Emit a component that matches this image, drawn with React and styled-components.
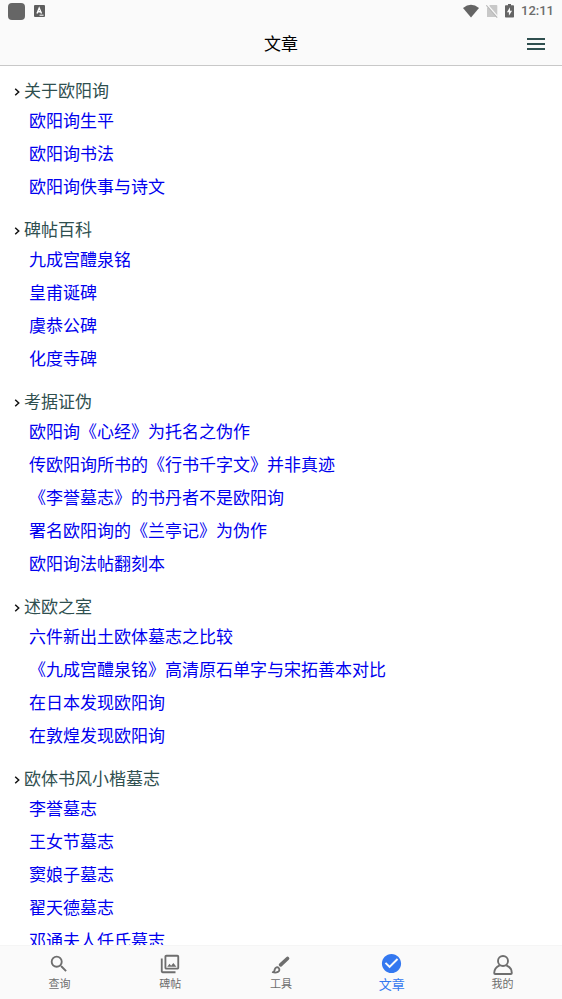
import styled, { createGlobalStyle } from "styled-components";
import { MdCheckCircle, MdOutlinePhotoLibrary, MdSearch } from "react-icons/md";

const GlobalStyle = createGlobalStyle`
    * {
        box-sizing : border-box;
    }
    body {
        margin : 0;
        background-color : #ffffff;
        font-family : Roboto, "Noto Sans CJK SC", sans-serif;
    }
`;

const Container = styled.div`
    height : 100vh;
    display : flex;
    flex-direction : column;
`;

const StatusBar = styled.div`
    height : 22px;
    flex-shrink : 0;
    padding : 0px 8px;
    display : flex;
    align-items : center;
    justify-content : space-between;
    background-color : #fafafa;
    color : #646464;
`;

const StatusGroup = styled.div`
    display : flex;
    align-items : center;
    gap : ${props => props.$gap}px;
`;

const AppBadge = styled.div`
    width : 17px;
    height : 17px;
    border-radius : 4px;
    background-color : #666666;
`;

const Clock = styled.span`
    font-size : 13px;
    line-height : 24px;
    font-weight : 500;
    color : #6c6c6c;
`;

const Header = styled.header`
    height : 44px;
    flex-shrink : 0;
    padding : 0px 17px;
    display : grid;
    grid-template-columns : 1fr auto 1fr;
    align-items : center;
    background-color : #fafafa;
    border-bottom : 1px solid #c8c8c8;
`;

const Title = styled.h1`
    grid-column : 2;
    margin : 0;
    font-size : 17px;
    line-height : 24px;
    font-weight : 400;
    color : #000000;
`;

const MenuButton = styled.button`
    justify-self : end;
    display : flex;
    padding : 0;
    border : none;
    background : none;
    color : #2f4f4f;
    cursor : pointer;
`;

const Content = styled.main`
    flex : 1;
    min-height : 0;
    overflow-y : auto;
    scrollbar-width : none;
    padding : 12px 14px;
    display : flex;
    flex-direction : column;
    gap : 13px;
`;

const Section = styled.section`
    flex-shrink : 0;
`;

const SectionTitle = styled.h2`
    margin : 0;
    display : flex;
    align-items : center;
    gap : 4px;
    font-size : 17px;
    line-height : 27px;
    font-weight : 400;
    color : #2f4f4f;
`;

const List = styled.ul`
    margin : 0;
    padding : 0px 0px 0px 15px;
    list-style : none;
`;

const ListItem = styled.li`
    font-size : 17px;
    line-height : 33px;
`;

const ArticleLink = styled.a`
    color : #0000ee;
    text-decoration : none;
`;

const TabBar = styled.nav`
    height : 54px;
    flex-shrink : 0;
    padding : 0px 4px;
    display : flex;
    background-color : #fafafa;
    border-top : 1px solid #f5f5f5;
`;

const Tab = styled.button`
    flex : 1;
    padding : 6px 0px 0px;
    border : none;
    background : none;
    display : flex;
    flex-direction : column;
    align-items : center;
    font-family : inherit;
    font-size : ${props => props.$active ? 13 : 11}px;
    line-height : 18px;
    color : ${props => props.$active ? "#3478f0" : "#6e6e6e"};
    cursor : pointer;
`;

const TabIcon = styled.span`
    height : 24px;
    display : flex;
    align-items : ${props => props.$active ? "flex-start" : "flex-end"};
    padding-bottom : 1px;
`;

const LetterIcon = () => (
    <svg width="11" height="12" viewBox="0 0 11 12">
        <rect width="11" height="12" rx="1" fill="#5e5e5e" />
        <path d="M3 8.5 5.2 3 7.5 8.5M3.8 6.8h2.8" fill="none" stroke="#ffffff" strokeWidth="1.4" />
        <path d="M5.5 10.2h4" stroke="#ffffff" strokeWidth="1" />
    </svg>
);

const WifiIcon = () => (
    <svg width="16" height="14" viewBox="0 0 16 14">
        <path d="M0 4Q8-2.5 16 4L8 13.5Z" fill="currentColor" />
    </svg>
);

const NoSimIcon = () => (
    <svg width="12" height="14" viewBox="0 0 12 14">
        <path d="M4 1h6.500q.8 0 .8.8V13H1V4Z" fill="#c8c8c8" />
        <path d="M1 .5 12 13.200" stroke="#fafafa" strokeWidth="1.6" />
        <path d="M.3 1.3 11.200 13.600" stroke="#b8b8b8" strokeWidth="1.2" />
    </svg>
);

const BatteryIcon = () => (
    <svg width="9" height="14" viewBox="0 0 9 14">
        <path d="M3 0h3v1.300h2.200q.8 0 .8.8v10.700q0 .8-.8.8H.8q-.8 0-.8-.8V2.100q0-.8.8-.8H3Z" fill="currentColor" />
        <path d="M5 3.200 1.900 8.200h2v3.500L7.100 6.700H5Z" fill="#fafafa" />
    </svg>
);

const MenuIcon = () => (
    <svg width="18" height="12" viewBox="0 0 18 12">
        <path d="M0 1h18M0 6h18M0 11h18" stroke="currentColor" strokeWidth="2" />
    </svg>
);

const ChevronIcon = () => (
    <svg width="6" height="8" viewBox="0 0 6 8">
        <path d="M1.2 .8 4.700 4 1.200 7.200" fill="none" stroke="#111111" strokeWidth="1.5" />
    </svg>
);

const BrushIcon = () => (
    <svg width="20" height="20" viewBox="0 0 20 20">
        <path d="M9.6 9.800 16.500 3.500" stroke="currentColor" strokeWidth="3.7" strokeLinecap="round" />
        <path d="M1.800 17.200c2-.2 1.500-1.500 2-3 .6-1.800 2.600-2.500 3.800-1.300 1.300 1.200.9 3.200-.7 4-1.600.8-3.600.8-5.100.3Z" fill="none" stroke="currentColor" strokeWidth="1.900" strokeLinejoin="round" />
    </svg>
);

const PersonIcon = () => (
    <svg width="20" height="20" viewBox="0 0 20 20">
        <circle cx="10" cy="6" r="5" fill="none" stroke="currentColor" strokeWidth="1.9" />
        <path d="M6.700 10.300C3.200 11.800 1.200 14.500 1.200 18q0 1 1 1h15.600q1 0 1-1c0-3.500-2-6.200-5.500-7.700" fill="none" stroke="currentColor" strokeWidth="1.9" />
    </svg>
);

const sections = [
    {
        title: "关于欧阳询",
        articles: ["欧阳询生平", "欧阳询书法", "欧阳询佚事与诗文"],
    },
    {
        title: "碑帖百科",
        articles: ["九成宫醴泉铭", "皇甫诞碑", "虞恭公碑", "化度寺碑"],
    },
    {
        title: "考据证伪",
        articles: [
            "欧阳询《心经》为托名之伪作",
            "传欧阳询所书的《行书千字文》并非真迹",
            "《李誉墓志》的书丹者不是欧阳询",
            "署名欧阳询的《兰亭记》为伪作",
            "欧阳询法帖翻刻本",
        ],
    },
    {
        title: "述欧之室",
        articles: [
            "六件新出土欧体墓志之比较",
            "《九成宫醴泉铭》高清原石单字与宋拓善本对比",
            "在日本发现欧阳询",
            "在敦煌发现欧阳询",
        ],
    },
    {
        title: "欧体书风小楷墓志",
        articles: ["李誉墓志", "王女节墓志", "窦娘子墓志", "翟天德墓志", "邓通夫人任氏墓志"],
    },
];

const tabs = [
    { label: "查询", icon: <MdSearch size={22} /> },
    { label: "碑帖", icon: <MdOutlinePhotoLibrary size={22} /> },
    { label: "工具", icon: <BrushIcon /> },
    { label: "文章", icon: <MdCheckCircle size={23} />, active: true },
    { label: "我的", icon: <PersonIcon /> },
];

const App = () => {
    return (
        <>
            <GlobalStyle />
            <Container>
                <StatusBar>
                    <StatusGroup $gap={9}>
                        <AppBadge />
                        <LetterIcon />
                    </StatusGroup>
                    <StatusGroup $gap={7}>
                        <WifiIcon />
                        <NoSimIcon />
                        <BatteryIcon />
                        <Clock>12:11</Clock>
                    </StatusGroup>
                </StatusBar>
                <Header>
                    <Title>文章</Title>
                    <MenuButton aria-label="菜单"><MenuIcon /></MenuButton>
                </Header>
                <Content>
                    {sections.map(section => (
                        <Section key={section.title}>
                            <SectionTitle><ChevronIcon />{section.title}</SectionTitle>
                            <List>
                                {section.articles.map(article => (
                                    <ListItem key={article}>
                                        <ArticleLink href="#">{article}</ArticleLink>
                                    </ListItem>
                                ))}
                            </List>
                        </Section>
                    ))}
                </Content>
                <TabBar>
                    {tabs.map(tab => (
                        <Tab key={tab.label} $active={tab.active}>
                            <TabIcon $active={tab.active}>{tab.icon}</TabIcon>
                            {tab.label}
                        </Tab>
                    ))}
                </TabBar>
            </Container>
        </>
    )
}

export default App
